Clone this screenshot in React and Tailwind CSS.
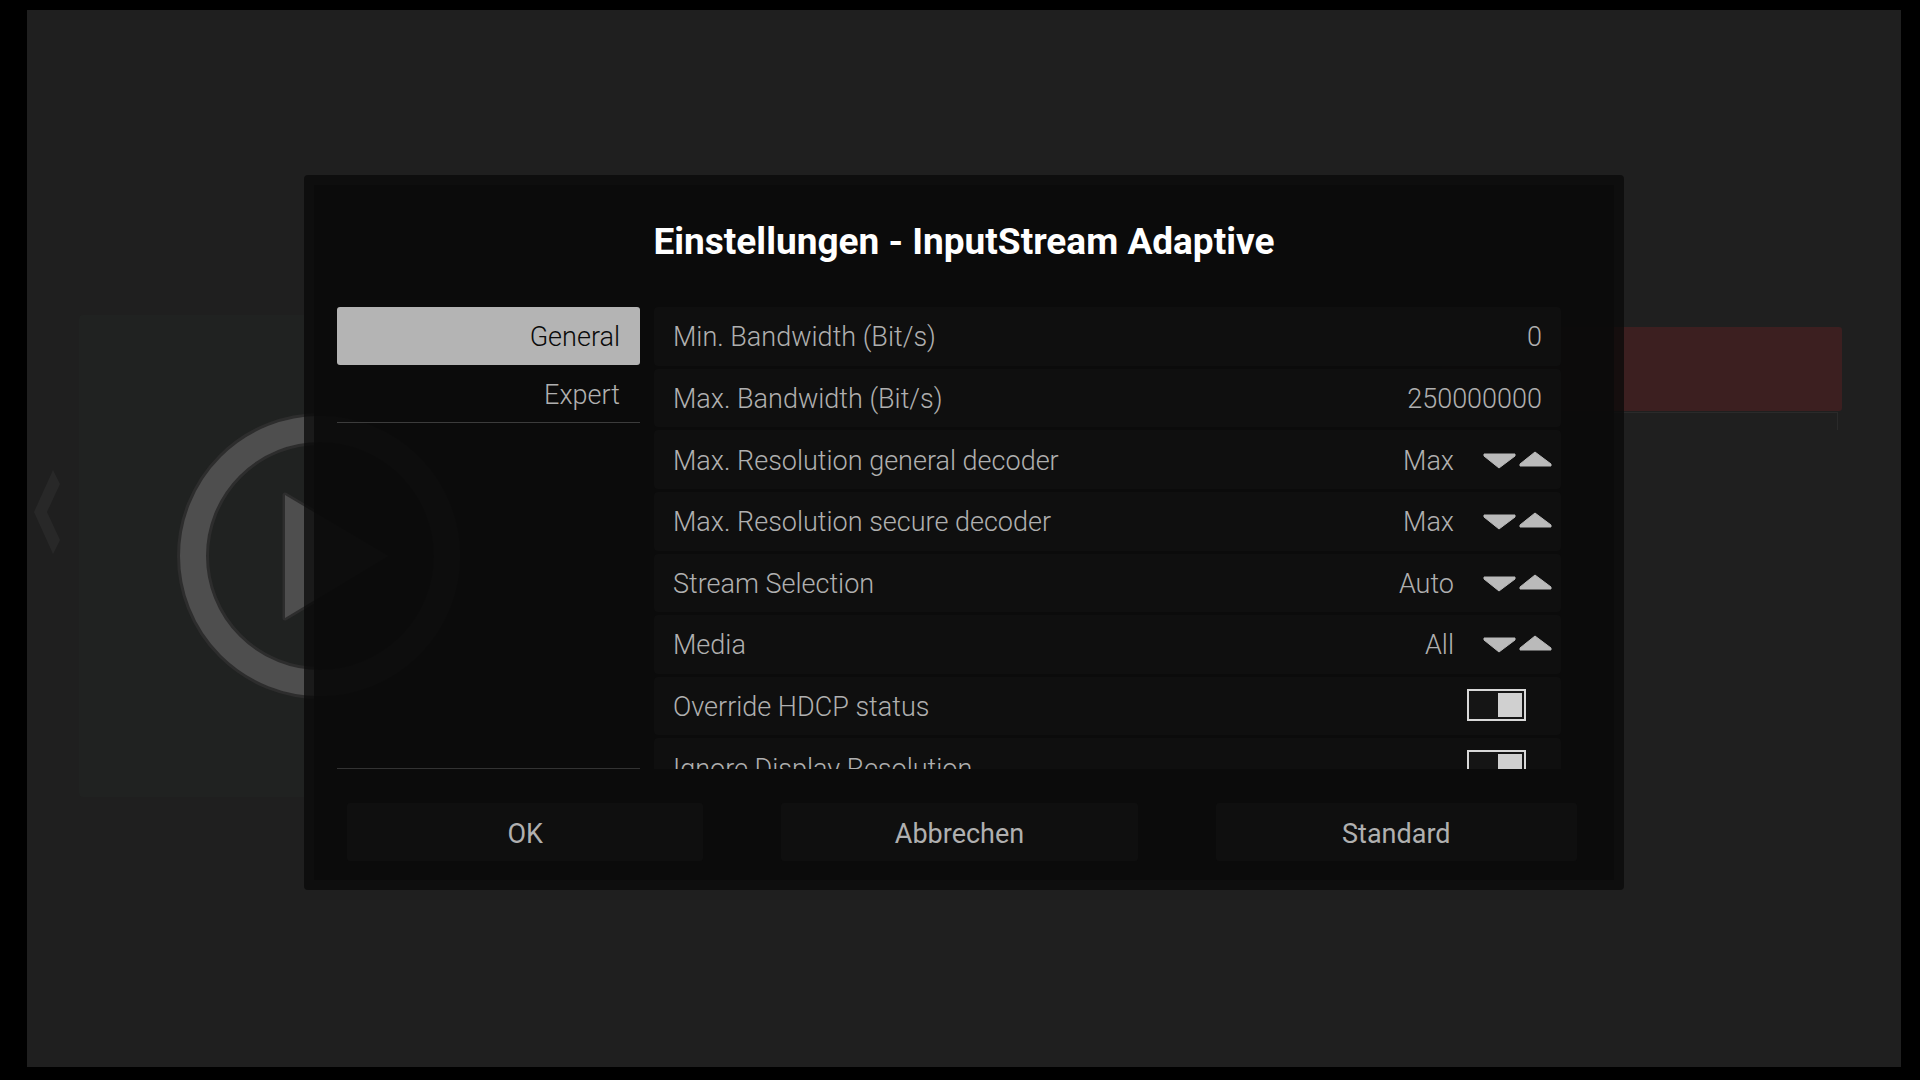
import React, { useState } from 'react'

const categories = ['General', 'Expert']

const settings = [
  { id: 'min-bandwidth', label: 'Min. Bandwidth (Bit/s)', type: 'number', value: '0' },
  { id: 'max-bandwidth', label: 'Max. Bandwidth (Bit/s)', type: 'number', value: '250000000' },
  { id: 'res-general', label: 'Max. Resolution general decoder', type: 'spin', value: 'Max' },
  { id: 'res-secure', label: 'Max. Resolution secure decoder', type: 'spin', value: 'Max' },
  { id: 'stream', label: 'Stream Selection', type: 'spin', value: 'Auto' },
  { id: 'media', label: 'Media', type: 'spin', value: 'All' },
  { id: 'hdcp', label: 'Override HDCP status', type: 'toggle', value: true },
  { id: 'display', label: 'Ignore Display Resolution', type: 'toggle', value: true },
]

const Arrow = ({ up }) => (
  <svg viewBox="0 0 34 18" className="w-[34px] h-[18px] fill-[#bababa] stroke-[#bababa]" strokeLinejoin="round">
    {up ? <path d="M16 1 L32 13 V15 H1 V13 Z" /> : <path d="M2 3 H33 V5 L17 17 L2 5 Z" />}
  </svg>
)

const SettingRow = ({ item }) => {
  const [value, setValue] = useState(item.value)

  return (
    <div className="flex items-center rounded-sm bg-[#0f0f0f] pl-[19px] overflow-hidden">
      <label htmlFor={item.id} className="flex-1 pt-[2px] whitespace-nowrap">{item.label}</label>

      {item.type === 'number' && (
        <input
          id={item.id}
          type="text"
          inputMode="numeric"
          value={value}
          onChange={(e) => setValue(e.target.value)}
          className="w-60 mr-[19px] pt-[2px] bg-transparent text-right outline-none"
        />
      )}

      {item.type === 'spin' && (
        <div className="flex items-center mr-2">
          <output id={item.id} className="mr-7 pt-[2px]">{value}</output>
          <button type="button" aria-label={`${item.label} previous`} className="mr-[3px]">
            <Arrow />
          </button>
          <button type="button" aria-label={`${item.label} next`}>
            <Arrow up />
          </button>
        </div>
      )}

      {item.type === 'toggle' && (
        <input
          id={item.id}
          type="checkbox"
          checked={value}
          onChange={(e) => setValue(e.target.checked)}
          className="flex items-center justify-start checked:justify-end appearance-none w-[59px] h-8 mr-[35px] mb-[3px] p-[2px] border-2 border-[#d8d8d8] bg-[#151515] before:block before:w-6 before:h-6 before:bg-[#d0d0d0]"
        />
      )}
    </div>
  )
}

// Dimmed page behind the dialog
const Backdrop = () => (
  <div className="absolute inset-0 flex items-start pl-[7px] pr-[59px] overflow-hidden">
    <svg viewBox="0 0 26 84" className="w-[26px] h-[84px] mt-[460px] shrink-0 fill-[#282828]">
      <path d="M0 42 L19 0 L26 14 L13 42 L26 70 L19 84 Z" />
    </svg>
    <div className="w-[482px] h-[482px] mt-[305px] ml-[19px] shrink-0 rounded-sm bg-[#202221] flex items-center justify-center">
      <svg viewBox="0 0 290 290" className="w-[290px] h-[290px]">
        <circle cx="145" cy="145" r="127" fill="none" stroke="#2d2d2d" strokeWidth="32" />
        <circle cx="145" cy="145" r="127" fill="none" stroke="#4e4e4e" strokeWidth="26" />
        <path d="M110 84 V207 L213 145 Z" fill="#4e4e4e" stroke="#2d2d2d" strokeWidth="5" strokeLinejoin="round" paintOrder="stroke" />
      </svg>
    </div>
    <div className="w-[400px] mt-[317px] ml-auto">
      <div className="h-[84px] rounded-[3px] bg-[#3c1f20]" />
      <div className="h-[18px] mt-px mr-1 border-t border-r border-[#2a2a2a]" />
    </div>
  </div>
)

const App = () => {
  const [active, setActive] = useState('General')

  return (
    <div className="min-h-screen flex bg-black pt-[10px] pr-[19px] pb-[13px] pl-[27px] font-['Roboto',sans-serif]">
      <div className="relative flex-1 flex items-center justify-center pb-3 bg-[#1f1f1f]">
        <Backdrop />

        <div
          role="dialog"
          aria-labelledby="dialog-title"
          className="relative w-full max-w-[1320px] rounded-[4px] border-[10px] border-[rgba(8,8,8,0.74)] bg-[rgba(10,10,10,0.96)] bg-clip-padding pb-[19px] text-[27px] leading-8 text-[#b0b0b0]"
        >
          <h1 id="dialog-title" className="flex items-center justify-center h-28 mb-[10px] pt-[2px] text-[37px] font-bold text-white">
            Einstellungen - InputStream Adaptive
          </h1>

          <div className="flex gap-[14px] h-[462px] pl-[23px] pr-[53px] font-light">
            {/* Categories */}
            <nav className="w-[303px] shrink-0 flex flex-col border-b border-[#333333]">
              {categories.map((name) => (
                <button
                  key={name}
                  type="button"
                  onClick={() => setActive(name)}
                  className={
                    active === name
                      ? 'h-[58px] pt-[2px] pr-5 text-right rounded-[3px] bg-[#b4b4b4] text-[#0a0a0a]'
                      : 'h-[58px] pt-[2px] pr-5 text-right border-b border-[#3c3c3c]'
                  }
                >
                  {name}
                </button>
              ))}
            </nav>

            {/* Settings list, last row is cut by the viewport */}
            <div className="flex-1 overflow-hidden">
              <div className="grid grid-rows-8 gap-[3px] h-[490px]">
                {settings.map((item) => (
                  <SettingRow key={item.id} item={item} />
                ))}
              </div>
            </div>
          </div>

          <div className="grid grid-cols-[356fr_356fr_361fr] gap-[78px] mt-[34px] pl-[33px] pr-[37px]">
            {['OK', 'Abbrechen', 'Standard'].map((label) => (
              <button key={label} type="button" className="h-[58px] pt-1 rounded-[3px] bg-[#0f0f0f]">
                {label}
              </button>
            ))}
          </div>
        </div>
      </div>
    </div>
  )
}

export default App
